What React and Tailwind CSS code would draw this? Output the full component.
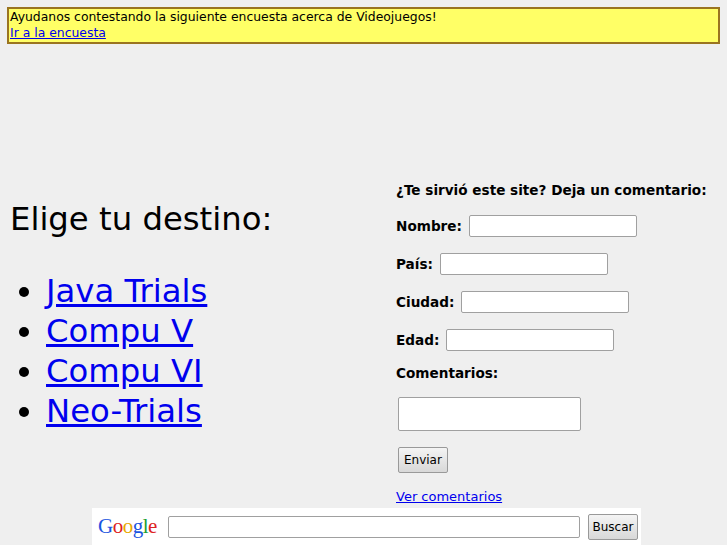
export default function App() {
  const font = { fontFamily: '"DejaVu Sans", sans-serif' };
  const input = 'bg-white border border-[#a0a0a0] rounded-[2px] h-[22px]';
  return (
    <div className="w-[727px] h-[545px] bg-[#efefef] overflow-hidden text-black" style={font}>
      <div className="mx-[7px] mt-[7px] border-2 border-[#9a7420] bg-[#ffff66] px-[1px] text-[12.4px] leading-[16px] pb-[1px]">
        <div>Ayudanos contestando la siguiente encuesta acerca de Videojuegos!</div>
        <a href="#" className="text-[#0000ee] underline">Ir a la encuesta</a>
      </div>
      <div className="flex">
        <div className="w-[396px] pl-[10px] pt-[155px]">
          <h1 className="text-[32.3px] leading-[40px]">Elige tu destino:</h1>
          <ul className="mt-[32px] list-disc pl-[36px] text-[32.3px] leading-[40px]">
            {['Java Trials', 'Compu V', 'Compu VI', 'Neo-Trials'].map(t => (
              <li key={t}><a href="#" className="text-[#0000ee] underline">{t}</a></li>
            ))}
          </ul>
        </div>
        <div className="pt-[138px] text-[13.6px] font-bold">
          <div className="leading-[17px]">¿Te sirvió este site? Deja un comentario:</div>
          {['Nombre:', 'País:', 'Ciudad:', 'Edad:'].map((l, i) => (
            <div key={l} className={`flex items-center gap-[7px] ${i === 0 ? 'mt-[16px]' : 'mt-[16px]'}`}>
              <span>{l}</span>
              <div className={input} style={{ width: 168 }} />
            </div>
          ))}
          <div className="mt-[14px] leading-[17px]">Comentarios:</div>
          <div className={`${input} mt-[15px] ml-[2px] w-[183px] h-[34px]`} />
          <button className="mt-[16px] ml-[2px] px-[5px] h-[26px] border border-[#999] rounded-[2px] bg-gradient-to-b from-[#f4f4f4] to-[#d8d8d8] font-normal text-[12px]">Enviar</button>
          <div className="mt-[14px] font-normal text-[13px]">
            <a href="#" className="text-[#0000ee] underline">Ver comentarios</a>
          </div>
        </div>
      </div>
      <div className="absolute left-[92px] top-[508px] w-[549px] h-[37px] bg-white flex items-center pl-[6px] gap-[8px]">
        <span className="text-[21px] w-[62px] tracking-[-0.5px]" style={{ fontFamily: '"Liberation Serif", serif' }}>
          <span className="text-[#1a54e0]">G</span><span className="text-[#d22]">o</span><span className="text-[#e8a800]">o</span><span className="text-[#1a54e0]">g</span><span className="text-[#20a030]">l</span><span className="text-[#d22]">e</span>
        </span>
        <div className="bg-white border border-[#a0a0a0] rounded-[2px] h-[22px] w-[412px]" />
        <button className="h-[26px] w-[50px] border border-[#999] rounded-[2px] bg-gradient-to-b from-[#f4f4f4] to-[#d8d8d8] text-[12px]">Buscar</button>
      </div>
    </div>
  );
}
